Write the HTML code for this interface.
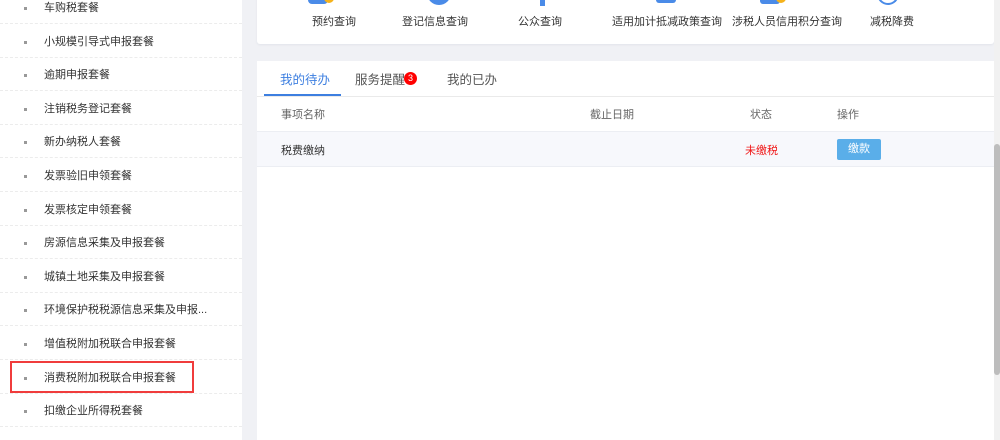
<!DOCTYPE html>
<html><head><meta charset="utf-8"><style>
*{margin:0;padding:0;box-sizing:border-box}
html,body{width:1000px;height:440px;overflow:hidden}
body{background:#f0f1f5;font-family:"Liberation Sans","Noto Sans CJK SC",sans-serif;position:relative;color:#333}
.side{position:absolute;left:0;top:0;width:242px;height:440px;background:#fff}
.it{position:absolute;left:0;width:242px;height:34px;border-bottom:1px dashed #ececec;font-size:11px;line-height:14px}
.it span{position:absolute;left:44px;top:0}
.it i{position:absolute;left:24px;width:3px;height:3px;background:#999}
.c1{position:absolute;left:257px;top:-10px;width:737px;height:54px;background:#fff;border-radius:3px;box-shadow:0 1px 2px #e2e4ea}
.lab{position:absolute;top:23px;font-size:11px;color:#333;width:140px;text-align:center}
.ic{position:absolute;top:0;height:14px;background:#4a8be8}
.c2{position:absolute;left:257px;top:61px;width:737px;height:379px;background:#fff}
.tab{position:absolute;top:8px;font-size:12.5px;color:#555}
.sb{position:absolute;left:994px;top:0;width:6px;height:440px;background:#f1f1f1}
.th{position:absolute;left:994px;top:144px;width:6px;height:231px;background:#bdbdbd;border-radius:3px}
</style></head><body>
<div class="side">
<div class="it" style="top:-10px"><i style="top:17px"></i><span style="top:11px">车购税套餐</span></div>
<div class="it" style="top:24px"><i style="top:17px"></i><span style="top:11px">小规模引导式申报套餐</span></div>
<div class="it" style="top:57px"><i style="top:17px"></i><span style="top:11px">逾期申报套餐</span></div>
<div class="it" style="top:91px"><i style="top:17px"></i><span style="top:11px">注销税务登记套餐</span></div>
<div class="it" style="top:124px"><i style="top:17px"></i><span style="top:11px">新办纳税人套餐</span></div>
<div class="it" style="top:158px"><i style="top:17px"></i><span style="top:11px">发票验旧申领套餐</span></div>
<div class="it" style="top:192px"><i style="top:17px"></i><span style="top:11px">发票核定申领套餐</span></div>
<div class="it" style="top:225px"><i style="top:17px"></i><span style="top:11px">房源信息采集及申报套餐</span></div>
<div class="it" style="top:259px"><i style="top:17px"></i><span style="top:11px">城镇土地采集及申报套餐</span></div>
<div class="it" style="top:292px"><i style="top:17px"></i><span style="top:11px">环境保护税税源信息采集及申报...</span></div>
<div class="it" style="top:326px"><i style="top:17px"></i><span style="top:11px">增值税附加税联合申报套餐</span></div>
<div class="it" style="top:360px"><i style="top:17px"></i><span style="top:11px">消费税附加税联合申报套餐</span></div>
<div class="it" style="top:393px"><i style="top:17px"></i><span style="top:11px">扣缴企业所得税套餐</span></div>
<div style="position:absolute;left:10px;top:361px;width:184px;height:32px;border:2px solid #f03c3c"></div>
</div>
<div class="c1">
<div class="ic" style="left:51px;width:20px;border-radius:0 0 4px 4px"></div><div class="ic" style="left:67px;width:10px;background:#f5b21b;border-radius:0 0 5px 5px;height:13px"></div>
<div class="ic" style="left:170px;width:24px;border-radius:0 0 12px 12px;height:15px"></div>
<div class="ic" style="left:283px;width:5px;height:16px"></div>
<div class="ic" style="left:399px;width:20px;height:13px;border-radius:0 0 3px 3px"></div>
<div class="ic" style="left:503px;width:20px;height:14px;border-radius:0 0 3px 3px"></div><div class="ic" style="left:519px;width:10px;background:#f5b21b;border-radius:0 0 5px 5px;height:13px"></div>
<div style="position:absolute;left:620px;top:0;width:22px;height:15px;border:2px solid #4a8be8;border-top:none;border-radius:0 0 11px 11px"></div>
<div class="lab" style="left:7px">预约查询</div>
<div class="lab" style="left:108px">登记信息查询</div>
<div class="lab" style="left:213px">公众查询</div>
<div class="lab" style="left:340px">适用加计抵减政策查询</div>
<div class="lab" style="left:460px">涉税人员信用积分查询</div>
<div class="lab" style="left:565px">减税降费</div>
</div>
<div class="c2">
<div class="tab" style="left:23px;color:#3d7fe0">我的待办</div>
<div class="tab" style="left:98px">服务提醒</div>
<div style="position:absolute;left:147px;top:11px;width:13px;height:13px;border-radius:7px;background:#f00;color:#fff;font-size:9px;text-align:center;line-height:13px">3</div>
<div class="tab" style="left:190px">我的已办</div>
<div style="position:absolute;left:7px;top:33px;width:77px;height:2px;background:#3d7fe0"></div>
<div style="position:absolute;left:0;top:35px;width:737px;height:1px;background:#eaeaea"></div>
<div style="position:absolute;left:0;top:70px;width:737px;height:36px;background:#f7f8fc;border-top:1px solid #eceef3;border-bottom:1px solid #eceef3"></div>
<div style="position:absolute;top:45px;left:24px;font-size:11px;color:#666">事项名称</div>
<div style="position:absolute;top:45px;left:333px;font-size:11px;color:#666">截止日期</div>
<div style="position:absolute;top:45px;left:493px;font-size:11px;color:#666">状态</div>
<div style="position:absolute;top:45px;left:580px;font-size:11px;color:#666">操作</div>
<div style="position:absolute;top:81px;left:24px;font-size:11px;color:#333">税费缴纳</div>
<div style="position:absolute;top:81px;left:488px;font-size:11px;color:#f01818">未缴税</div>
<div style="position:absolute;top:78px;left:580px;width:44px;height:21px;background:#5aaee9;color:#fff;font-size:11px;text-align:center;line-height:21px;border-radius:2px">缴款</div>
</div>
<div class="sb"></div>
<div class="th"></div>
</body></html>
